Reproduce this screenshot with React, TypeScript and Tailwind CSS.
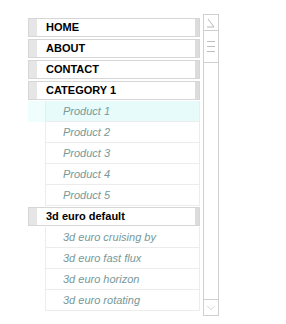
import { ChevronDown } from "lucide-react";

const main = ["HOME", "ABOUT", "CONTACT", "CATEGORY 1"];
const products = ["Product 1", "Product 2", "Product 3", "Product 4", "Product 5"];
const euro = ["3d euro cruising by", "3d euro fast flux", "3d euro horizon", "3d euro rotating"];

function MainItem({ label }: { label: string }) {
    return (
        <div className="h-[21px] flex items-stretch py-[1px]">
            <div className="flex flex-1 border border-[#d6d6d6] bg-white">
                <div className="w-[8px] bg-[#e6e6e6]" />
                <div className="flex-1 flex items-center pl-[9px] text-[11px] font-bold text-black">{label}</div>
                <div className="w-[4px] bg-[#dcdcdc]" />
            </div>
        </div>
    );
}

function SubItem({ label, active }: { label: string; active?: boolean }) {
    return (
        <div className={`h-[21px] flex ${active ? "bg-[#effdfd]" : ""}`}>
            <div className={`ml-[17px] flex-1 flex items-center pl-[17px] border border-t-0 border-[#ececec] text-[11px] italic text-[#769999] ${active ? "bg-[#e8fbfb]" : "bg-white"}`}>
                {label}
            </div>
        </div>
    );
}

export default function App() {
    return (
        <div className="w-[286px] h-[324px] bg-white flex pt-[14px] pl-[28px] font-['Liberation_Sans',Arial,sans-serif]">
            <div className="w-[172px] mt-[3px] flex flex-col">
                {main.map((m) => <MainItem key={m} label={m} />)}
                {products.map((p, i) => <SubItem key={p} label={p} active={i === 0} />)}
                <MainItem label="3d euro default" />
                {euro.map((e) => <SubItem key={e} label={e} />)}
            </div>
            <div className="ml-[3px] w-[16px] h-[302px] border border-[#cfcfcf] flex flex-col">
                <div className="h-[16px] border-b border-[#cfcfcf] flex items-center justify-center">
                    <svg width="10" height="10" viewBox="0 0 10 10" fill="none" stroke="#b8b8b8" strokeWidth="1">
                        <path d="M2 1 L8 9 L1 9" />
                    </svg>
                </div>
                <div className="h-[32px] border-b border-[#cfcfcf] flex flex-col justify-center items-center gap-[4px]">
                    <div className="w-[8px] h-px bg-[#bdbdbd]" />
                    <div className="w-[8px] h-px bg-[#bdbdbd]" />
                    <div className="w-[8px] h-px bg-[#bdbdbd]" />
                </div>
                <div className="flex-1" />
                <div className="h-[16px] border-t border-[#cfcfcf] flex items-center justify-center">
                    <ChevronDown size={14} strokeWidth={1} color="#b8b8b8" />
                </div>
            </div>
        </div>
    );
}
